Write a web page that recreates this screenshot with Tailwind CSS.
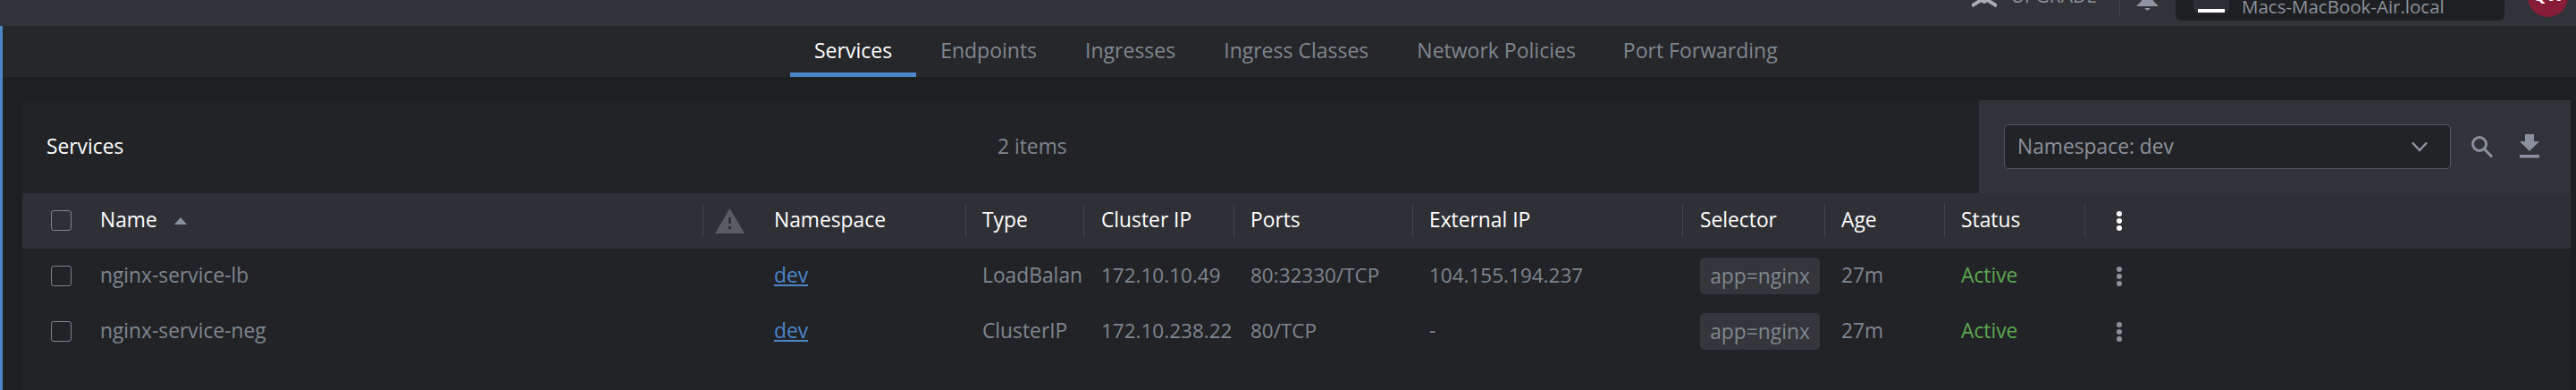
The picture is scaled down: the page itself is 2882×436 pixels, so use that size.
<!DOCTYPE html>
<html lang="en">
<head>
  <meta charset="UTF-8" />
  <title>Services</title>
  <script src="https://cdn.jsdelivr.net/npm/@tailwindcss/browser@4"></script>
</head>
<body class="bg-[#1e1f22] h-[436px] overflow-hidden font-['Open_Sans',sans-serif] text-[22.8px]">
  <!-- Top bar, cut off by the crop -->
  <header class="h-[29px] bg-[#313338] flex justify-end overflow-hidden">
    <div class="flex items-end shrink-0">
      <svg class="w-[28px] h-[29px]" viewBox="0 0 28 29" fill="none" stroke="#a8adb5" stroke-width="4"><path d="M0 6.5 L14 -2 L28 6.5" /><path d="M0 -6 L14 2 L28 -6" /></svg>
      <span class="ml-[16px] mb-[23px] leading-none text-[#8b919b] text-[21px] font-medium">UPGRADE</span>
      <div class="ml-[25px] mb-[12px] w-px h-[17px] bg-[#44464c]"></div>
      <svg class="ml-[18px] w-[25px] h-[29px]" viewBox="0 0 25 29"><path d="M6 -6 H19 V1 L25 7 H0 L6 1 Z M9 9 H16 L12.5 12 Z" fill="#8f95a0" /></svg>
      <div class="ml-[19px] mb-[6px] w-[368px] h-[23px] bg-[#1e1f22] rounded-b-[7px] flex items-end">
        <div class="ml-[20px] mb-[8px] w-[40px] h-[15px] bg-[#2d2e33] rounded-b-[7px] flex justify-center items-end">
          <div class="mb-[1px] w-[30px] h-[4px] bg-white"></div>
        </div>
        <span class="ml-[14px] mb-[3px] leading-[26px] text-[#8b929c] text-[20.5px]">Macs-MacBook-Air.local</span>
      </div>
      <div class="ml-[26px] mr-[9px] mb-[10px] w-[45px] h-[45px] rounded-full bg-[#871c36] flex items-end justify-center overflow-hidden">
        <span class="mb-[15px] text-white font-bold leading-none text-[20px]">QW</span>
      </div>
    </div>
  </header>

  <div class="border-l-[3px] border-[#4a86c8] h-[407px]">
    <!-- Tabs -->
    <nav class="h-[57px] bg-[#26272a] flex pl-[881px] text-[23px]">
      <a class="px-[27px] h-full border-b-[5px] border-[#4a86c8] text-white leading-[54px]">Services</a>
      <a class="px-[27px] h-full text-[#7f8690] leading-[54px]">Endpoints</a>
      <a class="px-[27px] h-full text-[#7f8690] leading-[54px]">Ingresses</a>
      <a class="px-[27px] h-full text-[#7f8690] leading-[54px]">Ingress Classes</a>
      <a class="px-[27px] h-full text-[#7f8690] leading-[54px]">Network Policies</a>
      <a class="pl-[26px] pr-[27px] h-full text-[#7f8690] leading-[54px]">Port Forwarding</a>
    </nav>

    <main class="mt-[26px] ml-[22px] w-[2851px] h-[324px] bg-[#222327]">
      <!-- Title row -->
      <div class="h-[104px] flex items-center">
        <h1 class="ml-[27px] w-[1064px] text-white">Services</h1>
        <span class="text-[#7f8690]">2 items</span>
        <div class="ml-auto h-full w-[662px] bg-[#313338] flex items-center">
          <div class="ml-[28px] w-[500px] h-[50px] bg-[#222327] border border-[#55575d] rounded-[5px] flex items-center justify-between pl-[14px] pr-[24px] text-[#8b919b]">
            <span>Namespace: dev</span>
            <svg class="w-[20px] h-[12px]" viewBox="0 0 20 12" fill="none" stroke="#8f95a0" stroke-width="2.5"><path d="M2 1.5 L10 10 L18 1.5" /></svg>
          </div>
          <svg class="ml-[21px] w-[28px] h-[28px]" viewBox="0 0 28 28" fill="none" stroke="#8a919c" stroke-width="3"><circle cx="11" cy="11" r="7.5" /><path d="M16.5 16.5 L25 25.5" /></svg>
          <svg class="ml-[27px] w-[24px] h-[28px]" viewBox="0 0 24 28" fill="#8a919c"><path d="M7 0 H17 V8 H23 L12 19 L1 8 H7 Z M1 23 H23 V26.5 H1 Z" /></svg>
        </div>
      </div>

      <!-- Table header -->
      <div class="h-[62px] pb-[1px] bg-[#2f3035] text-white grid grid-cols-[87px_674px_80px_214px_132px_168px_200px_302px_159px_134px_157px_1fr] items-center">
        <div class="pl-[32px]"><div class="w-[23px] h-[23px] border border-[#7d838c] rounded-[3px]"></div></div>
        <div class="flex items-center">Name<svg class="ml-[19px] w-[14px] h-[8px]" viewBox="0 0 14 8"><path d="M7 0 L14 8 H0 Z" fill="#8a919c" /></svg></div>
        <div class="h-[37px] border-l border-[#42444a] flex items-center pl-[13px]">
          <svg class="w-[33px] h-[28px]" viewBox="0 0 33 28"><path fill-rule="evenodd" d="M16.5 0 L33 28 H0 Z M15 10 H18 V17 H15 Z M15 20 H18 V23 H15 Z" fill="#5a5c61" /></svg>
        </div>
        <div>Namespace</div>
        <div class="h-[37px] border-l border-[#42444a] pl-[18px] flex items-center">Type</div>
        <div class="h-[37px] border-l border-[#42444a] pl-[19px] flex items-center">Cluster IP</div>
        <div class="h-[37px] border-l border-[#42444a] pl-[18px] flex items-center">Ports</div>
        <div class="h-[37px] border-l border-[#42444a] pl-[18px] flex items-center">External IP</div>
        <div class="h-[37px] border-l border-[#42444a] pl-[19px] flex items-center">Selector</div>
        <div class="h-[37px] border-l border-[#42444a] pl-[18px] flex items-center">Age</div>
        <div class="h-[37px] border-l border-[#42444a] pl-[18px] flex items-center">Status</div>
        <div class="h-[37px] border-l border-[#42444a] pl-[34px] flex items-center">
          <svg class="w-[8px] h-[24px]" viewBox="0 0 8 24" fill="#ffffff"><circle cx="4" cy="4" r="3" /><circle cx="4" cy="12" r="3" /><circle cx="4" cy="20" r="3" /></svg>
        </div>
      </div>

      <!-- Rows -->
      <div class="h-[62px] pb-[2px] text-[#7f8690] grid grid-cols-[87px_674px_80px_214px_132px_168px_200px_302px_159px_134px_157px_1fr] items-center">
        <div class="pl-[32px]"><div class="w-[23px] h-[23px] border border-[#7d838c] rounded-[3px]"></div></div>
        <div>nginx-service-lb</div>
        <div></div>
        <div><a class="text-[#4a86c8] underline">dev</a></div>
        <div class="pl-[19px] overflow-hidden whitespace-nowrap">LoadBalan</div>
        <div class="pl-[20px] whitespace-nowrap text-[22.5px]">172.10.10.49</div>
        <div class="pl-[19px] text-[22.5px]">80:32330/TCP</div>
        <div class="pl-[19px] text-[22.5px]">104.155.194.237</div>
        <div class="pl-[20px]"><span class="inline-block w-[134px] h-[41px] leading-[41px] text-center bg-[#35363b] rounded-[5px] whitespace-nowrap">app=nginx</span></div>
        <div class="pl-[19px]">27m</div>
        <div class="pl-[19px] text-[#5aa84f]">Active</div>
        <div class="pl-[35px] pt-[2px]">
          <svg class="w-[8px] h-[24px]" viewBox="0 0 8 24" fill="#8a919c"><circle cx="4" cy="4" r="3" /><circle cx="4" cy="12" r="3" /><circle cx="4" cy="20" r="3" /></svg>
        </div>
      </div>
      <div class="h-[62px] pb-[2px] text-[#7f8690] grid grid-cols-[87px_674px_80px_214px_132px_168px_200px_302px_159px_134px_157px_1fr] items-center">
        <div class="pl-[32px]"><div class="w-[23px] h-[23px] border border-[#7d838c] rounded-[3px]"></div></div>
        <div>nginx-service-neg</div>
        <div></div>
        <div><a class="text-[#4a86c8] underline">dev</a></div>
        <div class="pl-[19px]">ClusterIP</div>
        <div class="pl-[20px] whitespace-nowrap text-[22.5px]">172.10.238.22</div>
        <div class="pl-[19px] text-[22.5px]">80/TCP</div>
        <div class="pl-[19px]">-</div>
        <div class="pl-[20px]"><span class="inline-block w-[134px] h-[41px] leading-[41px] text-center bg-[#35363b] rounded-[5px] whitespace-nowrap">app=nginx</span></div>
        <div class="pl-[19px]">27m</div>
        <div class="pl-[19px] text-[#5aa84f]">Active</div>
        <div class="pl-[35px] pt-[2px]">
          <svg class="w-[8px] h-[24px]" viewBox="0 0 8 24" fill="#8a919c"><circle cx="4" cy="4" r="3" /><circle cx="4" cy="12" r="3" /><circle cx="4" cy="20" r="3" /></svg>
        </div>
      </div>
    </main>
  </div>
</body>
</html>
